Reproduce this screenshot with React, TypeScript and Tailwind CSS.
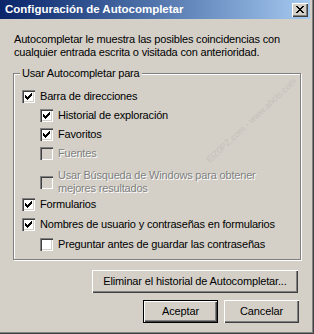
import React from 'react';

const FONT = "font-['Liberation_Sans',Arial,sans-serif]";

function CheckMark() {
  // 7x7 classic check, three pixels tall per column
  const tops = [2, 3, 4, 3, 2, 1, 0];
  const d = tops.map((t, c) => `M${c} ${t}h1v3h-1z`).join('');
  return (
    <svg width="7" height="7" viewBox="0 0 7 7" className="block" shapeRendering="crispEdges">
      <path d={d} fill="#000" />
    </svg>
  );
}

interface CheckProps {
  checked?: boolean;
  disabled?: boolean;
}

function Checkbox({ checked, disabled }: CheckProps) {
  return (
    <div
      className={`w-[13px] h-[13px] shrink-0 flex items-center justify-center shadow-[inset_1px_1px_0_#808080,inset_2px_2px_0_#404040,inset_-1px_-1px_0_#ffffff,inset_-2px_-2px_0_#d4d0c8] ${
        disabled ? 'bg-[#d4d0c8]' : 'bg-white'
      }`}
    >
      {checked && <CheckMark />}
    </div>
  );
}

interface RowProps {
  label: React.ReactNode;
  checked?: boolean;
  disabled?: boolean;
  indent?: boolean;
  className?: string;
}

function Row({ label, checked, disabled, indent, className = '' }: RowProps) {
  return (
    <div className={`flex items-center gap-[5px] ${indent ? 'pl-[26px]' : 'pl-[8px]'} ${className}`}>
      <Checkbox checked={checked} disabled={disabled} />
      <span
        className={`leading-[13px] ${
          disabled ? 'text-[#808080] [text-shadow:1px_1px_0_#ffffff]' : 'text-black'
        }`}
      >
        {label}
      </span>
    </div>
  );
}

interface BtnProps {
  children: React.ReactNode;
  isDefault?: boolean;
  className?: string;
}

function Btn({ children, isDefault, className = '' }: BtnProps) {
  return (
    <div className={`h-[23px] ${isDefault ? 'border border-black' : ''} ${className}`}>
      <button className="w-full h-full bg-[#d4d0c8] text-black text-[11px] leading-none tracking-[-0.15px] shadow-[inset_1px_1px_0_#ffffff,inset_-1px_-1px_0_#404040,inset_-2px_-2px_0_#808080]">
        {children}
      </button>
    </div>
  );
}

function CloseX() {
  const rows: [number, number][][] = [
    [[0, 2], [6, 2]],
    [[1, 2], [5, 2]],
    [[2, 4]],
    [[3, 2]],
    [[2, 4]],
    [[1, 2], [5, 2]],
    [[0, 2], [6, 2]],
  ];
  const d = rows
    .map((segs, y) => segs.map(([x, w]) => `M${x} ${y}h${w}v1h-${w}z`).join(''))
    .join('');
  return (
    <svg width="8" height="7" viewBox="0 0 8 7" className="block" shapeRendering="crispEdges">
      <path d={d} fill="#000" />
    </svg>
  );
}

export default function App() {
  return (
    <div
      className={`${FONT} relative w-[314px] h-[334px] overflow-hidden bg-[#d4d0c8] text-[11px] tracking-[-0.18px] text-black border-r border-b border-r-[#404040] border-b-[#404040]`}
    >
      <div className="h-full flex flex-col border-r border-b border-r-[#808080] border-b-[#808080]">
        {/* title bar */}
        <div className="h-[19px] mr-[2px] flex items-center justify-between pl-[5px] pr-[2px] bg-gradient-to-r from-[#0a246a] to-[#a6caf0]">
          <span className="text-white font-bold text-[11.5px] leading-none tracking-normal">
            Configuración de Autocompletar
          </span>
          <div className="w-[16px] h-[14px] flex items-center justify-center bg-[#d4d0c8] shadow-[inset_1px_1px_0_#ffffff,inset_-1px_-1px_0_#404040,inset_-2px_-2px_0_#808080]">
            <CloseX />
          </div>
        </div>

        <div className="pl-[14px] pt-[14px] leading-[13px]">
          <p>Autocompletar le muestra las posibles coincidencias con</p>
          <p>cualquier entrada escrita o visitada con anterioridad.</p>
        </div>

        {/* group box */}
        <div className="relative ml-[13px] mr-[11px] mt-[14px] h-[187px] border border-[#808080] shadow-[inset_1px_1px_0_#ffffff,1px_1px_0_#ffffff]">
          <span className="absolute -top-[7px] left-[6px] px-[2px] bg-[#d4d0c8] leading-[13px]">
            Usar Autocompletar para
          </span>
          <div className="flex flex-col pt-[16px]">
            <Row checked label="Barra de direcciones" />
            <Row checked indent label="Historial de exploración" className="mt-[6px]" />
            <Row checked indent label="Favoritos" className="mt-[6px]" />
            <Row disabled indent label="Fuentes" className="mt-[6px]" />
            <Row
              disabled
              indent
              className="mt-[9px]"
              label={
                <>
                  Usar Búsqueda de Windows para obtener
                  <br />
                  mejores resultados
                </>
              }
            />
            <Row checked label="Formularios" className="mt-[3px]" />
            <Row checked label="Nombres de usuario y contraseñas en formularios" className="mt-[7px]" />
            <Row indent label="Preguntar antes de guardar las contraseñas" className="mt-[7px]" />
          </div>
        </div>

        <div className="flex justify-end pr-[14px] mt-[10px]">
          <Btn className="w-[206px]">Eliminar el historial de Autocompletar...</Btn>
        </div>
        <div className="flex justify-end gap-[6px] pr-[13px] mt-[7px]">
          <Btn isDefault className="w-[75px]">Aceptar</Btn>
          <Btn className="w-[75px]">Cancelar</Btn>
        </div>
      </div>

      {/* watermark */}
      <span className="absolute left-[192px] top-[114px] w-[120px] -rotate-[43deg] text-[9px] tracking-normal text-[#c4c0b8] whitespace-nowrap pointer-events-none">
        ElZ0PZ.com - www.abcis.com
      </span>
    </div>
  );
}
